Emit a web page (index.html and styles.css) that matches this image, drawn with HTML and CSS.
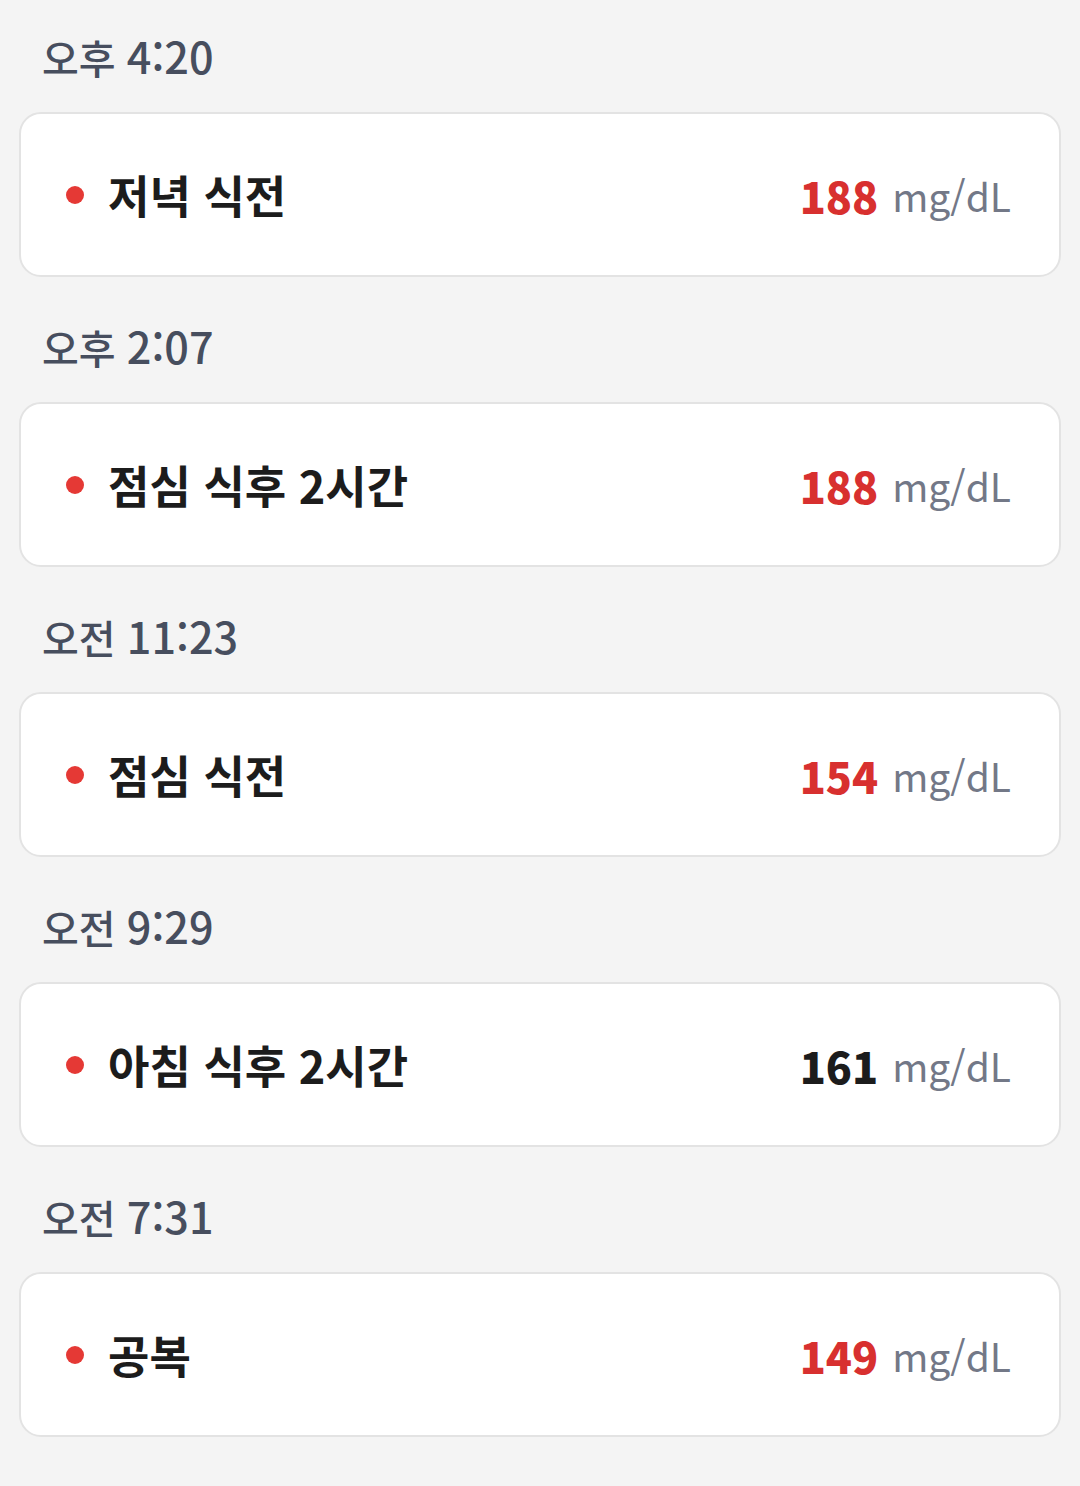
FILE: index.html
```html
<!DOCTYPE html>
<html lang="ko">
<head>
<meta charset="UTF-8">
<meta name="viewport" content="width=device-width, initial-scale=1.0">
<title>혈당 기록</title>
<link rel="stylesheet" href="styles.css">
</head>
<body>

  <div id="lista">

    <section class="grupo">
      <p class="hora">오후 <span class="num">4:20</span></p>
      <div class="tarjeta">
        <span class="punto"></span>
        <span class="titulo">저녁 식전</span>
        <span class="valor alto">188</span>
        <span class="unidad">mg/dL</span>
      </div>
    </section>

    <section class="grupo">
      <p class="hora">오후 <span class="num">2:07</span></p>
      <div class="tarjeta">
        <span class="punto"></span>
        <span class="titulo">점심 식후 2시간</span>
        <span class="valor alto">188</span>
        <span class="unidad">mg/dL</span>
      </div>
    </section>

    <section class="grupo">
      <p class="hora">오전 <span class="num">11:23</span></p>
      <div class="tarjeta">
        <span class="punto"></span>
        <span class="titulo">점심 식전</span>
        <span class="valor alto">154</span>
        <span class="unidad">mg/dL</span>
      </div>
    </section>

    <section class="grupo">
      <p class="hora">오전 <span class="num">9:29</span></p>
      <div class="tarjeta">
        <span class="punto"></span>
        <span class="titulo">아침 식후 2시간</span>
        <span class="valor">161</span>
        <span class="unidad">mg/dL</span>
      </div>
    </section>

    <section class="grupo">
      <p class="hora">오전 <span class="num">7:31</span></p>
      <div class="tarjeta">
        <span class="punto"></span>
        <span class="titulo">공복</span>
        <span class="valor alto">149</span>
        <span class="unidad">mg/dL</span>
      </div>
    </section>

  </div>

</body>
</html>
```

FILE: styles.css
```css
body {
  font-family: "Noto Sans CJK KR", "Noto Sans", sans-serif;
  margin: 0;
  padding: 0;
  background-color: #f4f4f4;
}

#lista {
  padding: 27px 19px 0;
}

.grupo {
  margin-bottom: 40px;
}

.hora {
  margin: 0 0 29px;
  padding-left: 23px;
  height: 56px;
  line-height: 56px;
  font-size: 40px;
  font-weight: 500;
  color: #474e5e;
}

/* los números se ven más grandes que el hangul */
.hora .num {
  font-size: 1.08em;
}

.tarjeta {
  display: flex;
  align-items: center;
  height: 165px;
  box-sizing: border-box;
  padding: 0 48px 0 45px;
  background-color: #fff;
  border: 2px solid #e3e3e3;
  border-radius: 22px;
}

.punto {
  width: 18px;
  height: 18px;
  border-radius: 50%;
  background-color: #e53935;
  margin-right: 24px;
}

.titulo {
  flex: 1;
  font-size: 45px;
  font-weight: bold;
  color: #1c1c1c;
}

.valor {
  font-size: 43px;
  font-weight: 900;
  color: #1c1c1c;
  margin-right: 14px;
}

.valor.alto {
  color: #d8302f;
}

.unidad {
  font-size: 39px;
  color: #737887;
}
```
